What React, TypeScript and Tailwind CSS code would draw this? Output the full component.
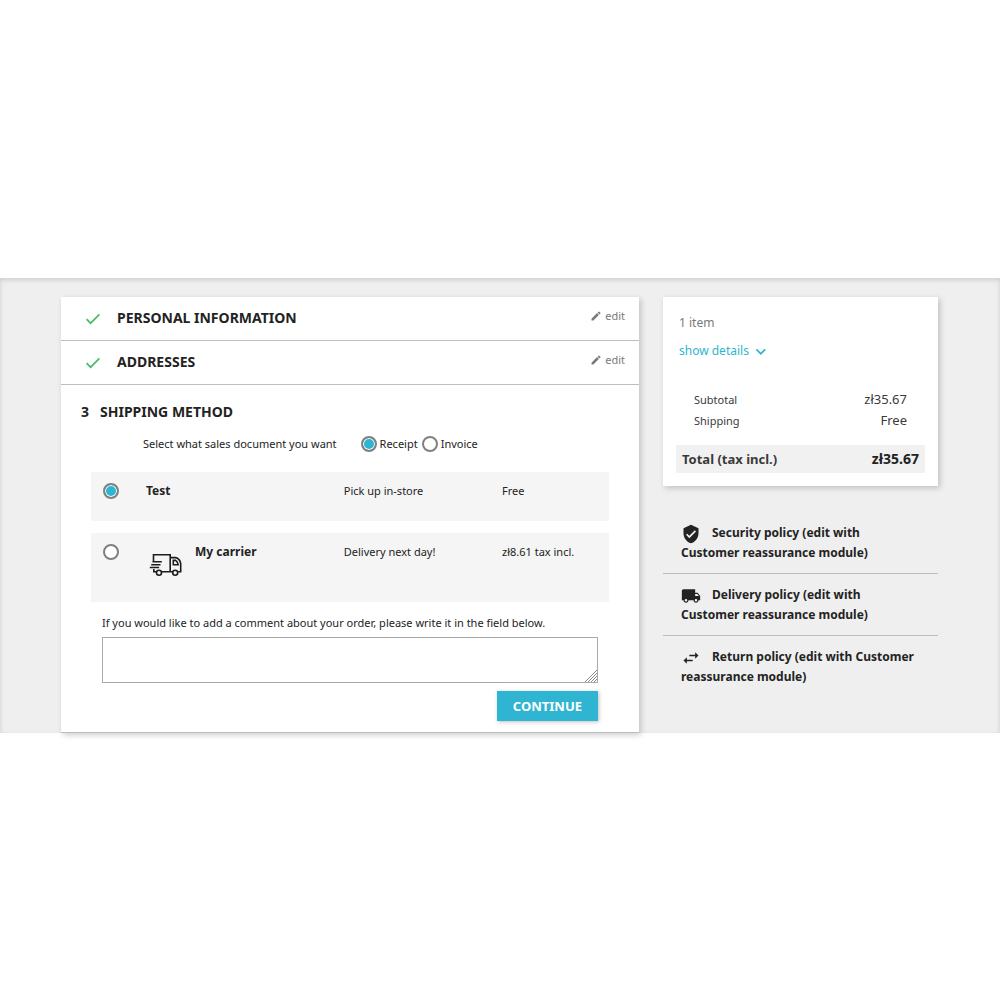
import { useState } from "react";
import {
  MdEdit,
  MdLocalShipping,
  MdSwapHoriz,
  MdVerifiedUser,
} from "react-icons/md";

const radioClass =
  "size-4 shrink-0 cursor-pointer appearance-none rounded-full border-2 border-[#808080] bg-white checked:bg-[#2fb5d2] checked:shadow-[inset_0_0_0_1px_#fff]";

const carriers = [
  { id: "test", name: "Test", delay: "Pick up in-store", price: "Free" },
  {
    id: "my-carrier",
    name: "My carrier",
    delay: "Delivery next day!",
    price: "zł8.61 tax incl.",
    hasLogo: true,
  },
];

const policies = [
  {
    icon: MdVerifiedUser,
    text: "Security policy (edit with Customer reassurance module)",
  },
  {
    icon: MdLocalShipping,
    text: "Delivery policy (edit with Customer reassurance module)",
  },
  {
    icon: MdSwapHoriz,
    text: "Return policy (edit with Customer reassurance module)",
  },
];

const CheckIcon = () => (
  <svg
    viewBox="0 0 16 16"
    className="mt-[5px] size-4 text-[#4cbb6c]"
    fill="none"
    stroke="currentColor"
    strokeWidth="1.7"
    aria-hidden="true"
  >
    <path d="M1.6 8.2l4 4L14.4 3.4" />
  </svg>
);

const ChevronIcon = () => (
  <svg
    viewBox="0 0 16 16"
    className="size-4"
    fill="none"
    stroke="currentColor"
    strokeWidth="1.8"
    aria-hidden="true"
  >
    <path d="M3.4 6.4L7.8 10.8L12.2 6.4" />
  </svg>
);

const CarrierLogo = () => (
  <svg
    viewBox="0 0 34 26"
    className="h-[26px] w-[34px]"
    fill="none"
    stroke="#1c1c1c"
    strokeWidth="1.6"
    aria-hidden="true"
  >
    <path d="M4.5 9.5V2.8h16.7v16.7M12.8 19.8h10.6M4.8 17v2.8h2.4" />
    <path d="M21.2 5.6h5.3c3 .6 4.7 3 5.2 6v8.2h-2.5" />
    <path d="M24.3 8.4h2.3c1.5.8 2.2 2.2 2.6 4.4h-4.9z" />
    <path d="M3.5 9.7h9.3M2.2 12.7h9.3M.8 15.5h9.3" />
    <circle cx="10" cy="20.8" r="2.5" />
    <circle cx="26.2" cy="20.8" r="2.5" />
  </svg>
);

const DoneStep = ({ title }: { title: string }) => (
  <section className="flex h-11 items-start border-b border-[#bdbdbd] pt-[9px] pr-[14px] pl-6">
    <CheckIcon />
    <h1 className="ml-4 flex-1 text-sm leading-6 font-bold uppercase">
      {title}
    </h1>
    <a
      href="#"
      className="flex items-center gap-[3px] text-[11px] leading-5 text-[#7a7a7a]"
    >
      <MdEdit className="size-3" />
      edit
    </a>
  </section>
);

const ShippingStep = () => {
  const [doc, setDoc] = useState("receipt");
  const [carrier, setCarrier] = useState("test");
  const [comment, setComment] = useState("");

  return (
    <section className="border-b border-[#bdbdbd] pt-[15px] pb-[11px]">
      <h1 className="flex gap-[11px] pl-5 text-sm leading-6 font-bold uppercase">
        <span>3</span>
        Shipping Method
      </h1>

      <form className="px-[30px]" onSubmit={(e) => e.preventDefault()}>
        <fieldset className="mt-2 flex h-6 items-center pl-[52px] text-[11px] leading-6">
          <legend className="float-left mr-6">
            Select what sales document you want
          </legend>
          <label className="flex items-center gap-[3px]">
            <input
              type="radio"
              name="document"
              className={radioClass}
              checked={doc === "receipt"}
              onChange={() => setDoc("receipt")}
            />
            Receipt
          </label>
          <label className="ml-1 flex items-center gap-[3px]">
            <input
              type="radio"
              name="document"
              className={radioClass}
              checked={doc === "invoice"}
              onChange={() => setDoc("invoice")}
            />
            Invoice
          </label>
        </fieldset>

        <div className="mt-4 flex flex-col gap-3">
          {carriers.map((c) => (
            <label
              key={c.id}
              className="grid cursor-pointer grid-cols-[43px_5fr_4fr_107px] items-start bg-[#f5f5f5] pt-[9px] pb-5 pl-3 text-[11px] leading-5"
            >
              <input
                type="radio"
                name="carrier"
                className={`${radioClass} mt-[2px]`}
                checked={carrier === c.id}
                onChange={() => setCarrier(c.id)}
              />
              <span className="flex gap-3 text-xs leading-5 font-bold">
                {c.hasLogo && (
                  <span className="pt-[10px] pb-1 pl-[3px]">
                    <CarrierLogo />
                  </span>
                )}
                {c.name}
              </span>
              <span>{c.delay}</span>
              <span>{c.price}</span>
            </label>
          ))}
        </div>

        <div className="px-[11px]">
          <label
            htmlFor="comment"
            className="mt-[11px] mb-1 block text-[11px] leading-5"
          >
            If you would like to add a comment about your order, please write it
            in the field below.
          </label>
          <div className="relative">
            <textarea
              id="comment"
              value={comment}
              onChange={(e) => setComment(e.target.value)}
              className="block h-[46px] w-full resize-none border border-[#a9a9a9] bg-white p-2 text-[11px] outline-none"
            />
            <svg
              viewBox="0 0 12 12"
              className="pointer-events-none absolute right-px bottom-px size-3"
              stroke="#8a8a8a"
              strokeWidth="1"
              aria-hidden="true"
            >
              <path d="M0 12L12 0M3 12L12 3M6 12L12 6M9 12L12 9" />
            </svg>
          </div>
          <div className="mt-2 flex justify-end">
            <button
              type="submit"
              className="bg-[#2fb5d2] px-4 py-[5px] text-[13px] leading-5 font-bold text-white uppercase shadow-[1px_1px_4px_rgba(0,0,0,0.25)]"
            >
              Continue
            </button>
          </div>
        </div>
      </form>
    </section>
  );
};

const CartSummary = () => (
  <section className="bg-white px-[13px] pt-4 pb-[13px] shadow-[2px_2px_6px_rgba(0,0,0,0.2)]">
    <p className="pl-[3px] text-xs leading-5 text-[#7a7a7a]">1 item</p>
    <a
      href="#"
      className="mt-2 flex items-center gap-1 pl-[3px] text-xs leading-5 text-[#2fb5d2]"
    >
      show details
      <ChevronIcon />
    </a>
    <dl className="mt-7 px-[18px] text-[13px] leading-[21px] text-[#3a3a3a]">
      <div className="flex justify-between">
        <dt className="text-[11px]">Subtotal</dt>
        <dd>zł35.67</dd>
      </div>
      <div className="flex justify-between">
        <dt className="text-[11px]">Shipping</dt>
        <dd>Free</dd>
      </div>
    </dl>
    <p className="mt-[14px] flex justify-between bg-[#f1f1f1] px-[6px] text-sm leading-7 font-bold">
      <span className="text-[13px] text-[#3a3a3a]">Total (tax incl.)</span>
      <span>zł35.67</span>
    </p>
  </section>
);

const Reassurance = () => (
  <ul className="mt-[26px] divide-y divide-[#bdbdbd]">
    {policies.map(({ icon: Icon, text }) => (
      <li
        key={text}
        className="px-[18px] pt-[11px] pb-[10px] text-xs leading-5 font-bold"
      >
        <Icon className="-my-1 mr-[11px] inline size-5 align-middle" />
        {text}
      </li>
    ))}
  </ul>
);

export default function App() {
  return (
    <div className="min-h-screen bg-white pt-[278px] font-['Noto_Sans',sans-serif] text-[#232323]">
      <main className="flex items-start gap-6 bg-[#efefef] pt-[19px] pr-[62px] pl-[61px] shadow-[inset_0_2px_5px_rgba(0,0,0,0.14)]">
        <div className="min-w-0 flex-1 bg-white shadow-[2px_2px_6px_rgba(0,0,0,0.2)]">
          <DoneStep title="Personal Information" />
          <DoneStep title="Addresses" />
          <ShippingStep />
        </div>
        <aside className="w-[275px] shrink-0">
          <CartSummary />
          <Reassurance />
        </aside>
      </main>
    </div>
  );
}
